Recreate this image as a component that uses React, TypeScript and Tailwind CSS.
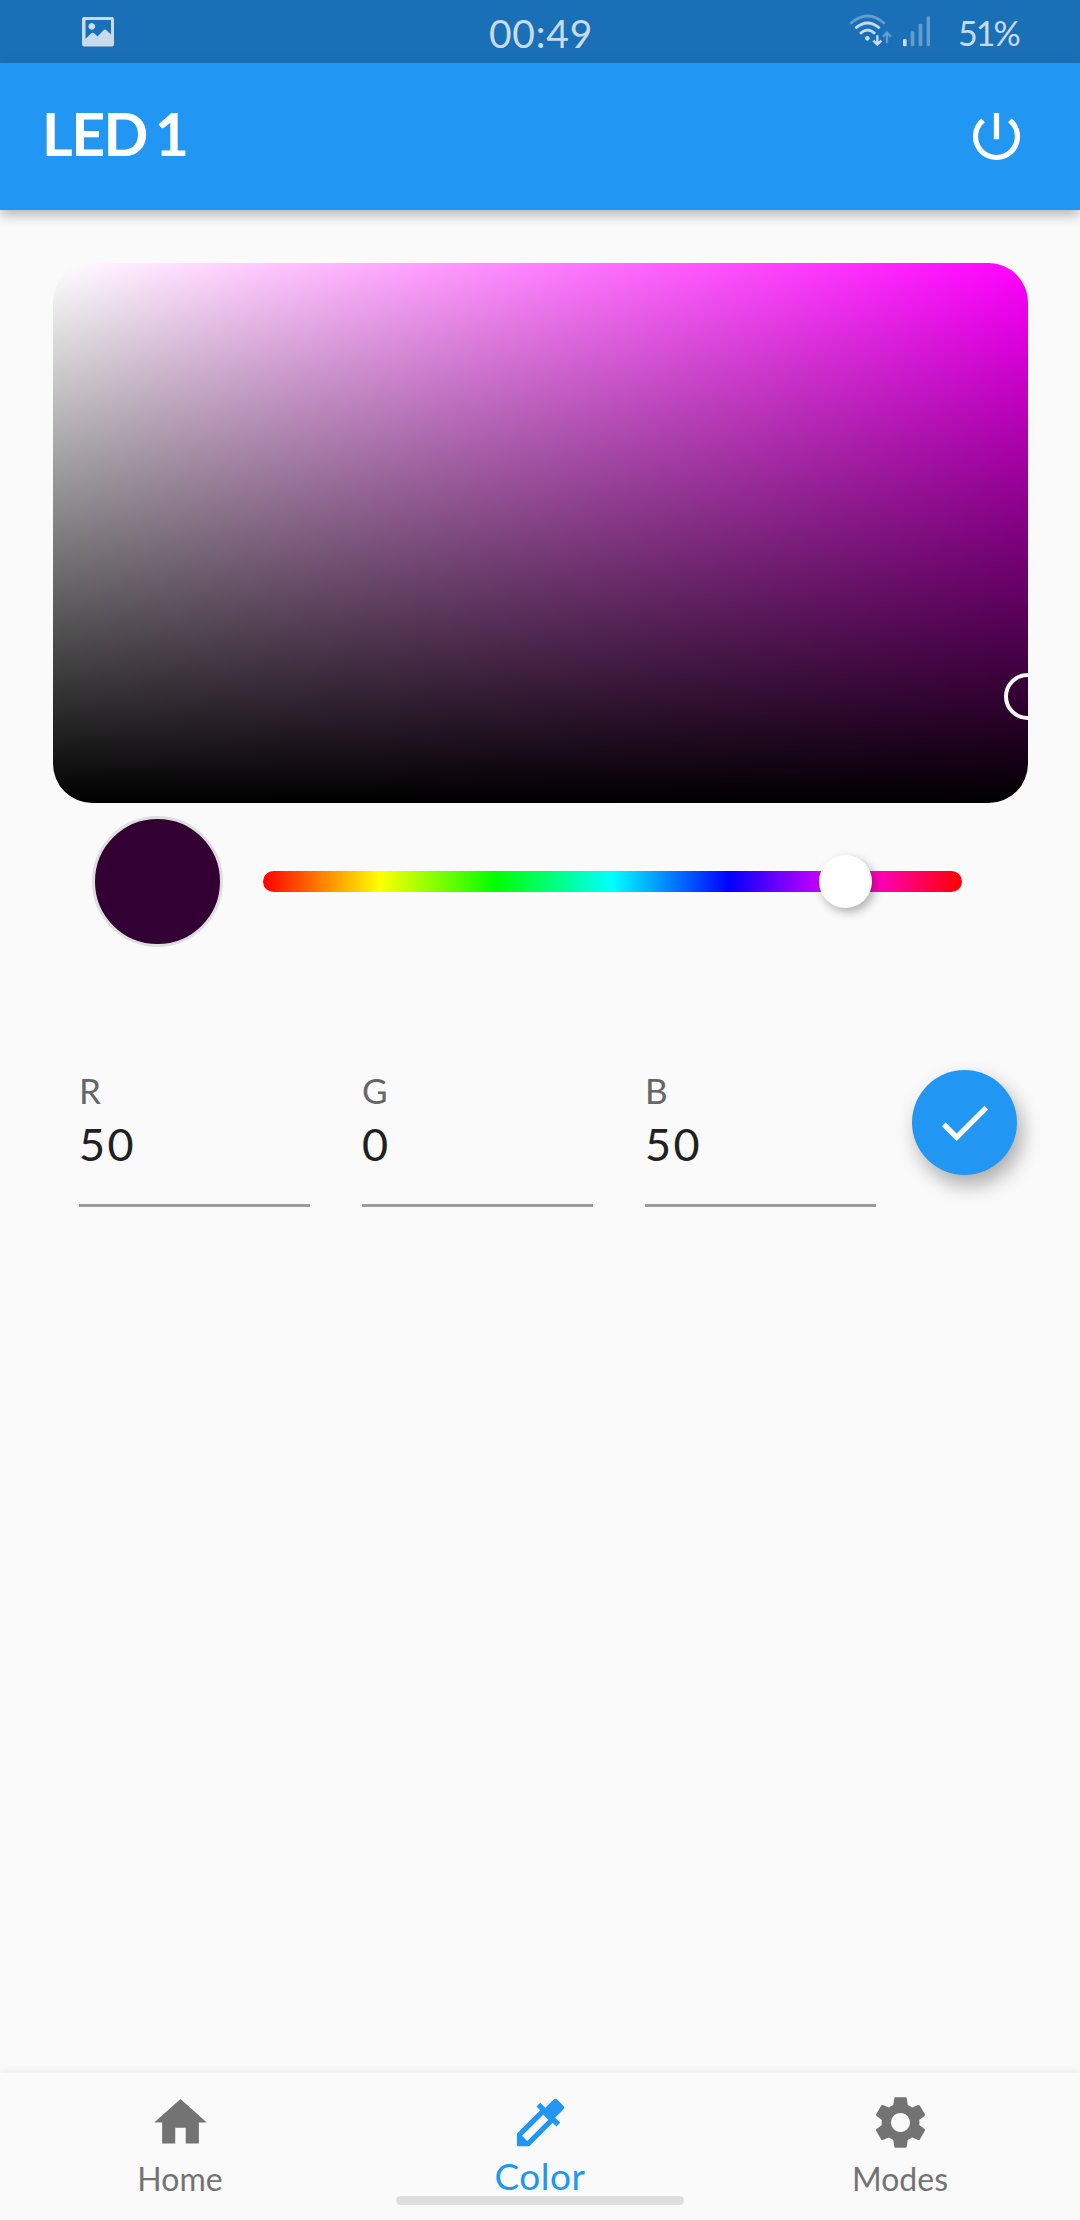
import React from "react";
import { MdCheck, MdColorize, MdHome, MdPowerSettingsNew, MdSettings } from "react-icons/md";

function StatusBar() {
  return (
    <div className="flex h-[63px] bg-[#1a70b7] text-[#c8dbec]">
      <div className="w-[360px] pl-[82px] pt-[17px]">
        <svg width="32" height="30" viewBox="0 0 32 30">
          <path
            fillRule="evenodd"
            fill="currentColor"
            d="M2 0H30Q32 0 32 2V27Q32 29.500 30 29.500H2Q0 29.500 0 27V2Q0 0 2 0ZM3.500 3V22L9 16.500Q10.800 14.800 12.500 16.500L15.500 19.500L21.500 13.200Q23 12 24.500 13.200L29 17.500V3ZM9.800 6A3.400 3.400 0 1 1 9.790 6Z"
          />
        </svg>
      </div>
      <div className="w-[360px] pl-[2px] text-center text-[39px] leading-[66px] tracking-[0.8px]">00:49</div>
      <div className="flex w-[360px] pl-[126px]">
        <svg width="92" height="63" viewBox="75 0 276 189" fill="none" stroke="currentColor" strokeWidth="8">
          <path d="M88 71Q140 25 191 71" opacity=".42" />
          <path d="M103 85Q140 53 176 85" />
          <path d="M117 101Q140 80 162 101" />
          <circle cx="139" cy="115" r="7" fill="currentColor" stroke="none" />
          <path d="M169 106V133M157 122L169 134L181 122" strokeWidth="7" />
          <path d="M198 129V100M186 110L198 98L210 110" strokeWidth="7" opacity=".42" />
          <g fill="currentColor" stroke="none">
            <rect x="246" y="117" width="11" height="22" rx="4" />
            <g opacity=".42">
              <rect x="269" y="94" width="11" height="45" rx="4" />
              <rect x="293" y="71" width="11" height="68" rx="4" />
              <rect x="317" y="49" width="10" height="90" rx="4" />
            </g>
          </g>
        </svg>
        <span className="ml-[20px] text-[34px] leading-[65px] tracking-[-2px]">51%</span>
      </div>
    </div>
  );
}

function Channel({ label, value }: { label: string; value: number }) {
  return (
    <div className="-mt-px h-[138px] w-[230.5px] border-b-[3px] border-[#9b9b9b]">
      <div className="text-[35px] leading-[42px] text-[#666666]">{label}</div>
      <div className="mt-[8px] text-[45px] leading-[50px] tracking-[2.5px] text-[#212121]">{value}</div>
    </div>
  );
}

export default function App() {
  return (
    <div className="flex h-[2220px] w-[1080px] flex-col overflow-hidden bg-[#fafafa] font-['Lato',sans-serif]">
      <StatusBar />
      <header className="flex h-[147px] items-center justify-between bg-[#2196f3] pl-[42px] pr-[52px] text-white shadow-[0_5px_12px_rgba(0,0,0,0.28)]">
        <h1 className="pb-[6px] text-[59px] font-bold leading-[60px] tracking-[-1.5px] [word-spacing:-5px]">LED 1</h1>
        <MdPowerSettingsNew size={63} />
      </header>

      <main className="flex-1">
        <div className="relative mx-[52.5px] mt-[52.5px] h-[540px] overflow-hidden rounded-[39.4px] bg-[linear-gradient(to_bottom,transparent,#000),linear-gradient(to_right,#fff,#f0f)]">
          <div className="absolute -right-[23.5px] top-[410.5px] size-[47px] rounded-full border-4 border-white" />
        </div>

        <div className="ml-[92px] mt-[13px] flex items-center">
          <div className="size-[131px] rounded-full border-[3px] border-[#dedede] bg-[#320032]" />
          <div className="relative ml-[39.5px] h-[21px] w-[699.5px] rounded-full bg-[linear-gradient(to_right,#f00,#ff0,#0f0,#0ff,#00f,#f0f,#f00)]">
            <div className="absolute left-[556.500px] top-[-16px] size-[53px] rounded-full bg-white shadow-[3px_4px_10px_rgba(0,0,0,0.3)]" />
          </div>
        </div>

        <div className="ml-[79px] mt-[123px] flex">
          <div className="flex gap-[52.500px]">
            <Channel label="R" value={50} />
            <Channel label="G" value={0} />
            <Channel label="B" value={50} />
          </div>
          <button className="ml-[36.500px] flex size-[105px] items-center justify-center rounded-full bg-[#2196f3] text-white shadow-[5px_10px_20px_rgba(0,0,0,0.32)]">
            <MdCheck size={63} />
          </button>
        </div>
      </main>

      <nav className="relative flex h-[147px] bg-[#fafafa] pt-[18px] text-[32px] leading-[36px] text-[#737373] shadow-[0_-3px_8px_rgba(0,0,0,0.06)]">
        <div className="flex w-[360px] flex-col items-center">
          <MdHome size={63} />
          <span className="mt-[7px]">Home</span>
        </div>
        <div className="flex w-[360px] flex-col items-center text-[#2196f3]">
          <MdColorize size={63} />
          <span className="mt-[4px] text-[37px] tracking-[0.5px]">Color</span>
        </div>
        <div className="flex w-[360px] flex-col items-center">
          <MdSettings size={63} />
          <span className="mt-[7px]">Modes</span>
        </div>
        <div className="absolute bottom-[15px] left-[396px] h-[9px] w-[288px] rounded-full bg-[#dedede]" />
      </nav>
    </div>
  );
}
